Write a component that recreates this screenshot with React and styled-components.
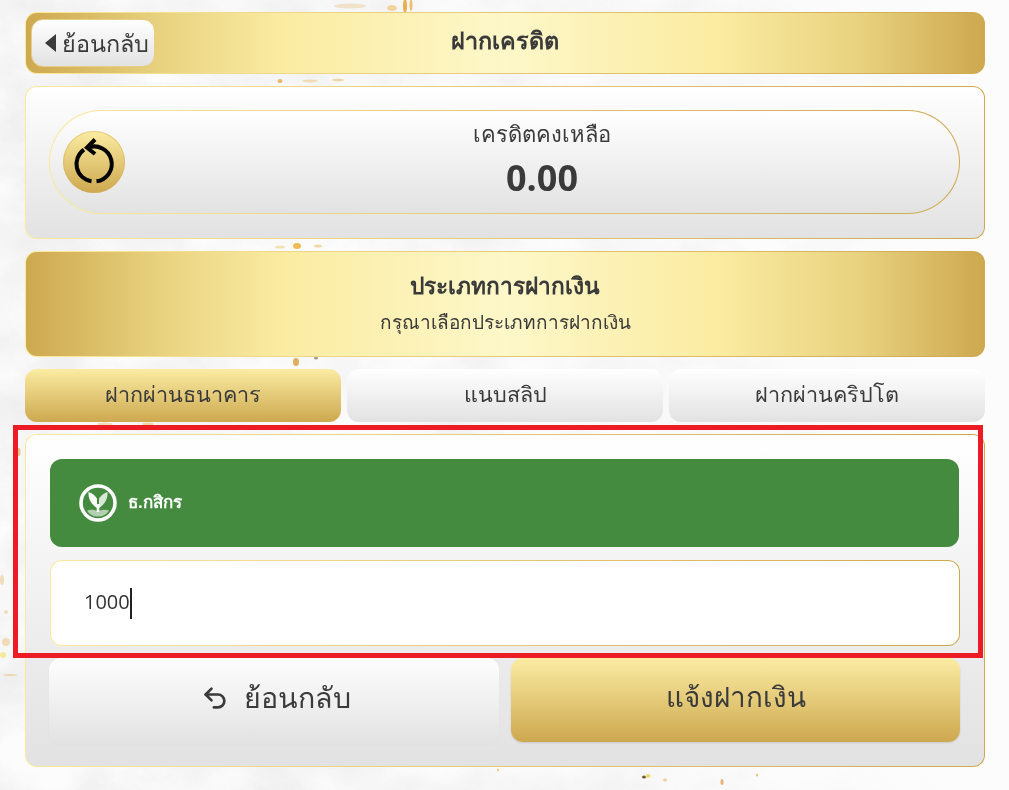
import React from 'react'
import styled, { createGlobalStyle, css } from 'styled-components'
import { Undo2 } from 'lucide-react'

const GlobalStyle = createGlobalStyle`
  html, body {
    margin: 0;
    padding: 0;
  }
  body {
    width: 1009px;
    height: 790px;
    overflow: hidden;
    color: #3a3a3a;
    font-family: "Noto Sans", "Open Sans", sans-serif;
    background-color: #fcfcfc;
  }
`

const goldBar = 'linear-gradient(90deg, #cda84f 0%, #e8d27f 14%, #fbeca2 27%, #fdf7c9 50%, #fbeca2 72%, #e8d27f 87%, #cda84f 100%)'
const goldDown = 'linear-gradient(180deg, #fbeca2 0%, #cda84f 100%)'
const silverDown = 'linear-gradient(180deg, #ffffff 0%, #e2e2e2 100%)'

const goldEdge = (fill) => css`
  border: 1px solid transparent;
  background-image: ${fill}, linear-gradient(90deg, #fbe99d 0%, #cfa94e 100%);
  background-origin: border-box;
  background-clip: padding-box, border-box;
`

const Marble = styled.svg`
  position: fixed;
  left: 0;
  top: 0;
  z-index: -1;
`

const Page = styled.div`
  position: relative;
  width: 960px;
  padding: 12px 0 0 25px;
  display: flex;
  flex-direction: column;
  gap: 12px;
`

const Header = styled.header`
  box-sizing: border-box;
  height: 62px;
  padding: 6px 5px;
  display: grid;
  grid-template-columns: 1fr auto 1fr;
  align-items: center;
  border-radius: 12px;
  ${goldEdge(goldBar)}
`

const BackLink = styled.a`
  box-sizing: border-box;
  width: 124px;
  height: 48px;
  padding-left: 7px;
  display: flex;
  align-items: center;
  justify-content: center;
  gap: 6px;
  font-size: 23.4px;
  border-radius: 12px;
  border: 1px solid #e8cf85;
  background: ${silverDown};
`

const Title = styled.h1`
  margin: -6px 0 0;
  font-size: 23.4px;
  font-weight: 700;
`

const Card = styled.section`
  box-sizing: border-box;
  padding: 23px 24px 24px 23px;
  border-radius: 12px;
  ${goldEdge(silverDown)}
`

const CreditPill = styled.div`
  box-sizing: border-box;
  height: 104px;
  padding-left: 13px;
  display: flex;
  align-items: center;
  border-radius: 52px;
  ${goldEdge(silverDown)}
`

const RefreshButton = styled.div`
  width: 62px;
  height: 62px;
  flex: none;
  border-radius: 50%;
  background: ${goldDown};
  box-shadow: inset 0 0 0 1px rgba(214, 178, 90, 0.5);
`

const CreditText = styled.div`
  flex: 1;
  display: flex;
  flex-direction: column;
  align-items: center;
  gap: 6px;
  margin-top: -4px;
`

const CreditLabel = styled.div`
  font-size: 22px;
  line-height: 30px;
`

const CreditValue = styled.div`
  font-family: "Open Sans", sans-serif;
  font-size: 36px;
  line-height: 48px;
  font-weight: 700;
`

const TypePanel = styled.div`
  box-sizing: border-box;
  height: 106px;
  display: flex;
  flex-direction: column;
  align-items: center;
  justify-content: center;
  gap: 8px;
  padding-bottom: 2px;
  border-radius: 12px;
  ${goldEdge(goldBar)}
`

const TypeTitle = styled.div`
  font-size: 22.7px;
  line-height: 30px;
  font-weight: 700;
`

const TypeHint = styled.div`
  font-size: 19px;
  line-height: 27px;
`

const Tabs = styled.nav`
  display: grid;
  grid-template-columns: repeat(3, 316px);
  gap: 6px;
`

const Tab = styled.button`
  height: 53px;
  padding: 0 0 3px;
  border: 0;
  border-radius: 12px;
  font: inherit;
  font-size: 21.6px;
  color: #3a3a3a;
  background: ${(p) => (p.$active ? goldDown : silverDown)};
`

const FormCard = styled.section`
  box-sizing: border-box;
  height: 333px;
  padding: 24px;
  display: flex;
  flex-direction: column;
  gap: 13px;
  border-radius: 12px;
  ${goldEdge(silverDown)}
`

const BankRow = styled.div`
  height: 88px;
  flex: none;
  margin-right: 1px;
  padding-left: 29px;
  display: flex;
  align-items: center;
  gap: 11px;
  box-sizing: border-box;
  border-radius: 12px;
  background: #458b3f;
  color: #fff;
  font-size: 17px;
  font-weight: 600;
  line-height: 1;
`

const BankName = styled.span`
  margin-top: -3px;
`

const AmountField = styled.div`
  box-sizing: border-box;
  height: 86px;
  flex: none;
  padding: 0 0 3px 33px;
  display: flex;
  align-items: center;
  font-family: "Open Sans", sans-serif;
  font-size: 20px;
  color: #333;
  border-radius: 12px;
  ${goldEdge('linear-gradient(#fff, #fff)')}
`

const Caret = styled.span`
  width: 2px;
  height: 31px;
  margin-top: 3px;
  background: #222;
`

const Actions = styled.div`
  margin: -1px 0 0 -1px;
  display: grid;
  grid-template-columns: 450px 449px;
  gap: 12px;
  align-items: start;
`

const ActionButton = styled.button`
  padding: 0 0 ${(p) => (p.$primary ? '6px' : '8px')} ${(p) => (p.$primary ? '0' : '4px')};
  border: 0;
  display: flex;
  align-items: center;
  justify-content: center;
  gap: 15px;
  font: inherit;
  font-size: ${(p) => (p.$primary ? '27.8px' : '28.6px')};
  color: #3a3a3a;
  border-radius: 12px;
  height: ${(p) => (p.$primary ? '84px' : '87px')};
  background: ${(p) => (p.$primary ? goldDown : 'linear-gradient(180deg, #fefefe 0%, #e2e2e2 100%)')};
  box-shadow: ${(p) => (p.$primary ? '0 1px 2px rgba(0, 0, 0, 0.12)' : '0 0 2px rgba(0, 0, 0, 0.04)')};
`

const Highlight = styled.div`
  position: absolute;
  left: 13px;
  top: 425px;
  width: 970px;
  height: 233px;
  box-sizing: border-box;
  border: 5px solid #ed1c24;
  pointer-events: none;
`

// gold flecks on the marble: x, y, rx, ry, colour
const flecks = [
  [405, 6, 2, 7, '#e9ae4f'], [411, 5, 1.5, 6, '#efbe6e'], [392, 8, 5, 3, '#f2d29a'], [350, 6, 16, 2.5, '#f0e2c8'],
  [280, 81, 2.5, 2, '#e8b868'], [310, 81, 8, 1.5, '#f0dcb6'], [338, 80, 6, 1.5, '#eed7a8'],
  [297, 246, 4, 3, '#edbb55'], [280, 247, 5, 1.5, '#f3e3b4'], [318, 246, 4, 1.5, '#efd9a8'],
  [296, 362, 3, 4, '#e0ad63'], [316, 358, 2, 1.5, '#b29a80'],
  [105, 424, 8, 1.5, '#efdcb8'], [148, 424, 6, 1.5, '#eed4a0'],
  [19, 452, 1.5, 4, '#e8c48a'], [2, 580, 2, 5, '#f0dcbc'], [6, 612, 2, 2, '#f0dcbc'],
  [6, 642, 4, 4, '#f0dcb8'], [3, 655, 3, 3, '#f5ea9c'], [10, 675, 7, 1, '#eed8b4'],
  [644, 777, 2, 1.5, '#6e5a3c'], [648, 776, 2.5, 2, '#f0dc70'], [722, 782, 1.5, 3, '#eab070'],
  [665, 780, 2, 1.5, '#eed09c'], [757, 775, 1, 1.5, '#eec27e'], [498, 770, 1, 1.5, '#eecb8e'],
]

const MarbleBackground = () => (
  <Marble width="1009" height="790" viewBox="0 0 1009 790">
    <defs>
      <filter id="veins" x="0" y="0" width="100%" height="100%">
        <feTurbulence type="fractalNoise" baseFrequency="0.012 0.018" numOctaves="5" seed="7" />
        <feColorMatrix values="0 0 0 0 0.84  0 0 0 0 0.84  0 0 0 0 0.84  1.8 0 0 0 -0.55" />
      </filter>
      <filter id="soft">
        <feGaussianBlur stdDeviation="0.7" />
      </filter>
      <linearGradient id="fade" x1="0" x2="1" y1="0" y2="0">
        <stop offset="0" stopColor="#fcfcfc" stopOpacity="0" />
        <stop offset="0.6" stopColor="#fcfcfc" stopOpacity="0.2" />
        <stop offset="0.95" stopColor="#fcfcfc" stopOpacity="1" />
      </linearGradient>
    </defs>
    <rect width="1009" height="790" filter="url(#veins)" />
    <rect width="1009" height="790" fill="url(#fade)" />
    <g filter="url(#soft)">
      {flecks.map(([x, y, rx, ry, c]) => (
        <ellipse key={`${x}-${y}`} cx={x} cy={y} rx={rx} ry={ry} fill={c} />
      ))}
    </g>
  </Marble>
)

const BackArrow = () => (
  <svg width="11" height="18" viewBox="0 0 11 18" fill="#3a3a3a">
    <path d="M11 0v18L0 9z" />
  </svg>
)

const RefreshIcon = () => (
  <svg width="62" height="62" viewBox="0 0 62 62" fill="none" stroke="#000" strokeWidth="4">
    <path d="M25 16.6A17.5 17.5 0 1 1 33.5 50.3" />
    <path d="M28.5 50.3A17.5 17.5 0 0 1 21 18.6" />
    <path d="M32 8.500 24 16.500l8 6.500" />
  </svg>
)

const KbankLogo = () => (
  <svg width="38" height="38" viewBox="0 0 38 38">
    <circle cx="19" cy="19" r="17" fill="none" stroke="#fff" strokeWidth="3.6" />
    <path d="M9.500 8C9 14 12 20.500 18 24V14.500C15.500 11 13 9 9.500 8z" fill="#fff" />
    <path d="M28.500 8C29 14 26 20.500 20 24V14.500C22.500 11 25 9 28.500 8z" fill="#fff" opacity="0.8" />
    <rect x="17.700" y="20" width="2.600" height="8" fill="#fff" />
    <path d="M8 26.500c4-1.200 7-.8 11 .8 4-1.600 7-2 11-.8-2.500 4-6 6-11 6s-8.500-2-11-6z" fill="#fff" opacity="0.6" />
  </svg>
)

function App() {
  return (
    <Page>
      <GlobalStyle />
      <MarbleBackground />
      <Header>
        <BackLink>
          <BackArrow />
          ย้อนกลับ
        </BackLink>
        <Title>ฝากเครดิต</Title>
      </Header>
      <Card>
        <CreditPill>
          <RefreshButton>
            <RefreshIcon />
          </RefreshButton>
          <CreditText>
            <CreditLabel>เครดิตคงเหลือ</CreditLabel>
            <CreditValue>0.00</CreditValue>
          </CreditText>
        </CreditPill>
      </Card>
      <TypePanel>
        <TypeTitle>ประเภทการฝากเงิน</TypeTitle>
        <TypeHint>กรุณาเลือกประเภทการฝากเงิน</TypeHint>
      </TypePanel>
      <Tabs>
        <Tab $active>ฝากผ่านธนาคาร</Tab>
        <Tab>แนบสลิป</Tab>
        <Tab>ฝากผ่านคริปโต</Tab>
      </Tabs>
      <FormCard>
        <BankRow>
          <KbankLogo />
          <BankName>ธ.กสิกร</BankName>
        </BankRow>
        <AmountField>
          1000
          <Caret />
        </AmountField>
        <Actions>
          <ActionButton>
            <Undo2 size={28} strokeWidth={2.3} />
            ย้อนกลับ
          </ActionButton>
          <ActionButton $primary>แจ้งฝากเงิน</ActionButton>
        </Actions>
      </FormCard>
      <Highlight />
    </Page>
  )
}

export default App
